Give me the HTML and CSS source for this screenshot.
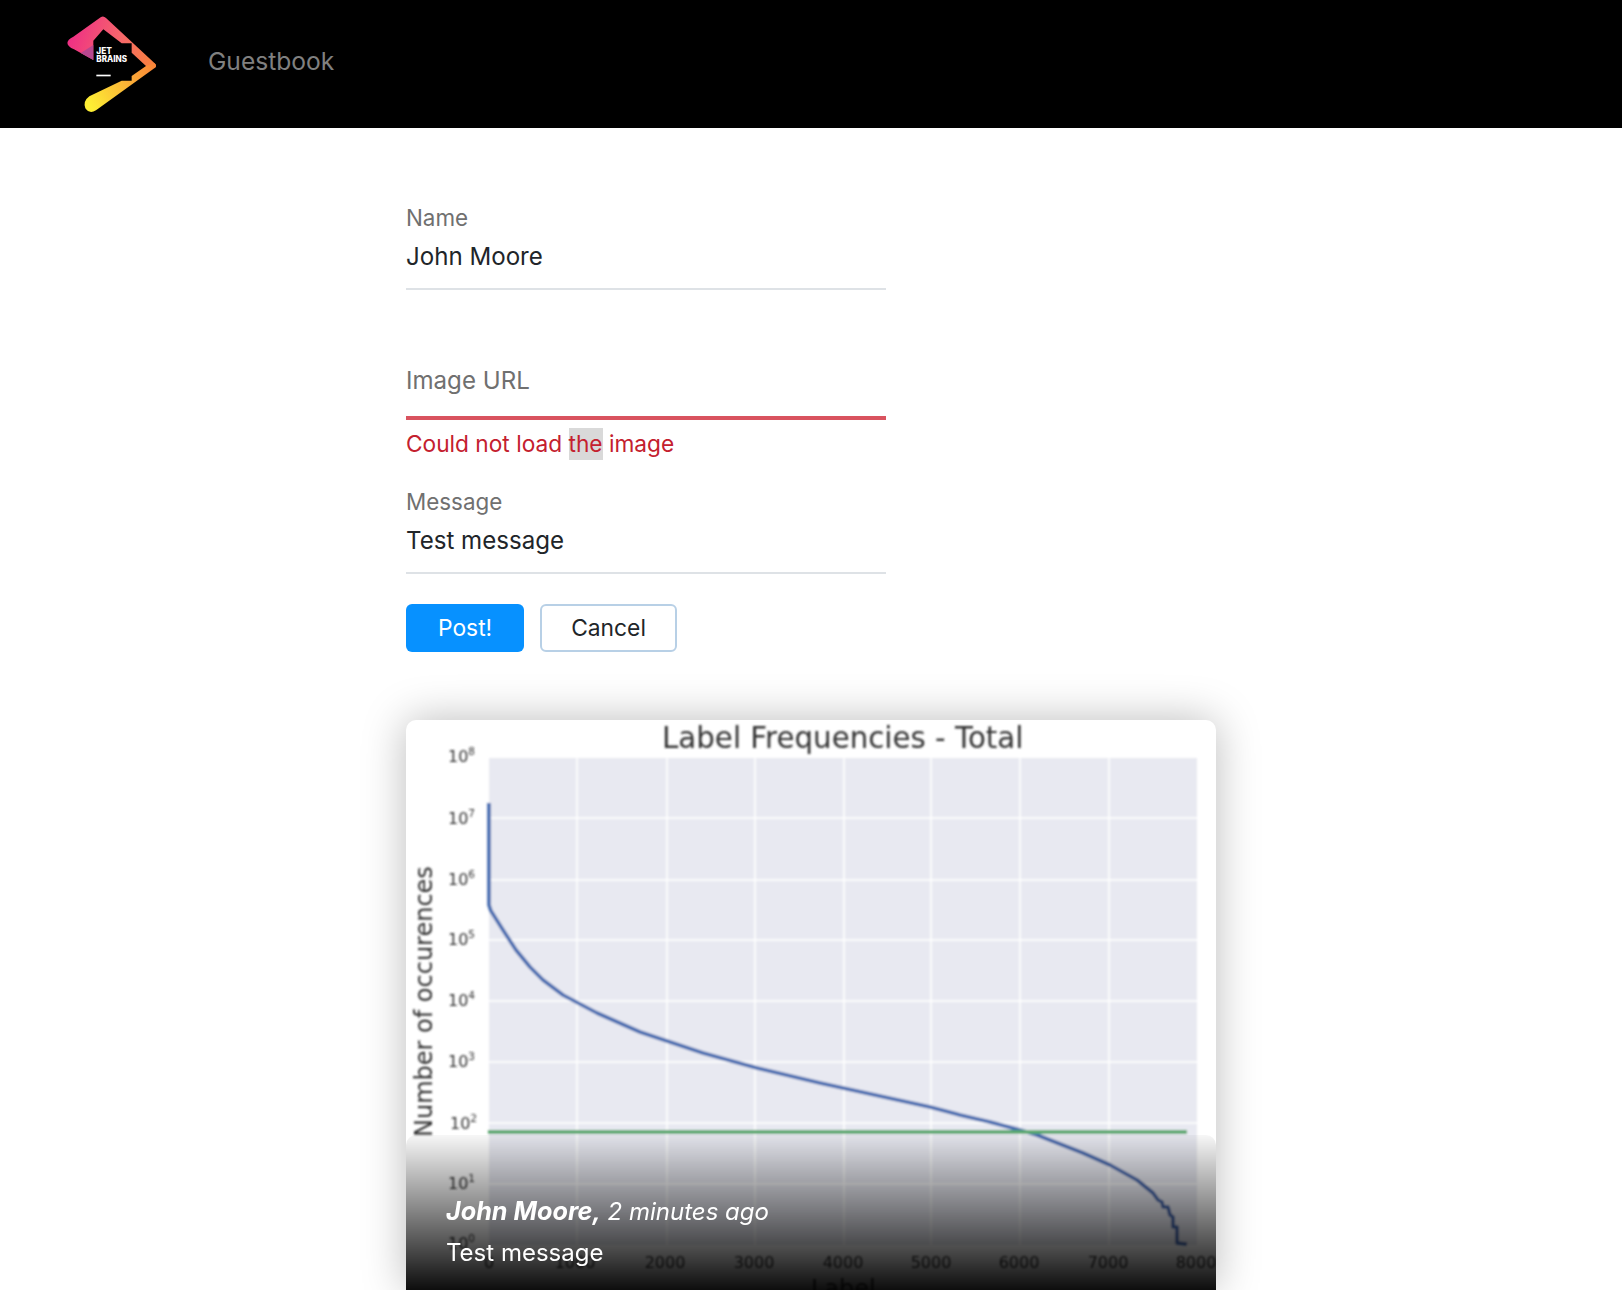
FILE: index.html

```html
<!DOCTYPE html>
<html lang="en">
<head>
  <meta charset="UTF-8" />
  <title>Guestbook</title>
  <link rel="stylesheet" href="styles.css">
</head>
<body>
  <nav class="navbar">
    <svg class="logo" viewBox="0 0 315 315" width="105" height="105">
      <defs>
        <linearGradient id="band-top" x1="25" y1="90" x2="288" y2="170" gradientUnits="userSpaceOnUse">
          <stop offset="0" stop-color="#ee2f85"/>
          <stop offset="0.55" stop-color="#f6686a"/>
          <stop offset="1" stop-color="#f98338"/>
        </linearGradient>
        <linearGradient id="band-bottom" x1="90" y1="285" x2="288" y2="168" gradientUnits="userSpaceOnUse">
          <stop offset="0" stop-color="#fdee34"/>
          <stop offset="1" stop-color="#f98338"/>
        </linearGradient>
      </defs>
      <path fill="url(#band-top)" d="M122 22 Q130 16 138 24 L284 160 Q292 168 284 174 L258 168 L215 128 L215 100 L185 100 L130 58 L100 92 L100 150 L42 118 C16 106 16 92 40 80 Z"/>
      <path fill="#b8468f" d="M100 105 L100 150 L62 129 Z"/>
      <path fill="url(#band-bottom)" d="M284 174 L108 301 Q88 313 76 295 Q68 274 88 259 L185 212 L215 212 L215 198 L258 168 L284 160 Q292 168 284 174 Z"/>
      <text class="logo-text" x="109" y="133">JET</text>
      <text class="logo-text" x="109" y="157" textLength="92" lengthAdjust="spacingAndGlyphs">BRAINS</text>
      <rect x="109" y="194" width="43" height="5" fill="#fff"/>
    </svg>
    <a class="navbar-brand" href="#">Guestbook</a>
  </nav>

  <main class="container">
    <form class="entry-form">
      <div class="field">
        <label for="name">Name</label>
        <input type="text" id="name" value="John Moore" />
      </div>

      <div class="field field-invalid">
        <input type="text" id="image" placeholder="Image URL" />
        <div class="error-text">Could not load <span class="selected">the</span> image</div>
      </div>

      <div class="field field-message">
        <label for="message">Message</label>
        <input type="text" id="message" value="Test message" />
      </div>

      <div class="actions">
        <button type="button" class="btn btn-primary">Post!</button>
        <button type="button" class="btn btn-outline">Cancel</button>
      </div>
    </form>

    <div class="card">
      <svg class="chart" viewBox="406 720 810 570" width="810" height="570">
        <defs>
          <filter id="soft"><feGaussianBlur stdDeviation="0.9"/></filter>
        </defs>
        <g filter="url(#soft)">
          <text class="chart-title" x="662" y="748">Label Frequencies - Total</text>
          <rect x="489" y="758" width="708" height="487" fill="#e8e9f1"/>
          <path class="grid" d="M577 758V1245M667 758V1245M755 758V1245M844 758V1245M931 758V1245M1020 758V1245M1109 758V1245"/>
          <path class="grid" d="M489 818H1197M489 880H1197M489 940H1197M489 1001H1197M489 1062H1197M489 1123H1197M489 1184H1197"/>
          <text class="tick" x="448" y="762">10<tspan class="sup" dy="-7">8</tspan></text>
          <text class="tick" x="448" y="824">10<tspan class="sup" dy="-7">7</tspan></text>
          <text class="tick" x="448" y="885">10<tspan class="sup" dy="-7">6</tspan></text>
          <text class="tick" x="448" y="945">10<tspan class="sup" dy="-7">5</tspan></text>
          <text class="tick" x="448" y="1006">10<tspan class="sup" dy="-7">4</tspan></text>
          <text class="tick" x="448" y="1067">10<tspan class="sup" dy="-7">3</tspan></text>
          <text class="tick" x="450" y="1129">10<tspan class="sup" dy="-7">2</tspan></text>
          <text class="tick" x="448" y="1189">10<tspan class="sup" dy="-7">1</tspan></text>
          <text class="tick" x="448" y="1249">10<tspan class="sup" dy="-7">0</tspan></text>
          <text class="tick tick-x" x="489" y="1268">0</text>
          <text class="tick tick-x" x="575" y="1268">1000</text>
          <text class="tick tick-x" x="665" y="1268">2000</text>
          <text class="tick tick-x" x="754" y="1268">3000</text>
          <text class="tick tick-x" x="843" y="1268">4000</text>
          <text class="tick tick-x" x="931" y="1268">5000</text>
          <text class="tick tick-x" x="1019" y="1268">6000</text>
          <text class="tick tick-x" x="1108" y="1268">7000</text>
          <text class="tick tick-x" x="1196" y="1268">8000</text>
          <text class="axis-label" transform="translate(432 1137) rotate(-90)">Number of occurences</text>
          <text class="axis-label" x="811" y="1297">Label</text>
          <path class="curve" d="M489 803L489 905L491 911L503 930L516 950L530 967L543 980L563 995L597 1013L640 1032L667 1041L703 1053L757 1068L820 1083L843 1088L930 1107L960 1115L990 1122L1020 1130L1037 1135L1083 1153L1110 1165L1137 1180L1153 1193L1158 1200L1162 1202L1163 1207L1168 1207L1170 1215L1173 1217L1173 1227L1177 1227L1177 1243L1187 1244"/>
          <path class="limit" d="M488 1132H1187"/>
        </g>
      </svg>
      <div class="caption">
        <div class="caption-meta"><b>John Moore,</b> 2 minutes ago</div>
        <div class="caption-text">Test message</div>
      </div>
    </div>
  </main>
</body>
</html>
```

FILE: styles.css

```css
* {
  box-sizing: border-box;
}
html, body {
  height: 100%;
}
body {
  margin: 0;
  overflow: hidden;
  font-family: Inter, "Liberation Sans", sans-serif;
  font-size: 24px;
  color: #212529;
  background-color: #fff;
}
.navbar {
  display: flex;
  align-items: center;
  height: 128px;
  padding-left: 60px;
  background-color: #000;
}
.logo {
  flex: none;
  margin-top: -4px;
}
.logo-text {
  font-family: Inter, sans-serif;
  font-size: 25px;
  font-weight: 800;
  fill: #fff;
}
.navbar-brand {
  margin-left: 43px;
  margin-top: -6px;
  color: #808080;
  font-size: 24.6px;
  text-decoration: none;
}
.container {
  width: 810px;
  margin: 0 auto;
  padding-top: 76px;
}
.entry-form {
  width: 480px;
}
.field label {
  display: block;
  height: 28px;
  color: #707070;
  font-size: 22.4px;
  line-height: 27px;
}
.field input {
  display: block;
  width: 100%;
  height: 58px;
  padding: 6px 0 14px;
  border: none;
  border-bottom: 2px solid #dee2e6;
  border-radius: 0;
  outline: none;
  color: #212529;
  background: none;
  font-family: inherit;
  font-size: 24.1px;
  line-height: 36px;
}
.field input::placeholder {
  color: #707070;
  opacity: 1;
}
.field-invalid {
  margin-top: 73px;
}
.field-invalid input {
  height: 57px;
  padding: 0 0 18px;
  border-bottom: 4px solid #d9535f;
}
.error-text {
  margin-top: 8px;
  color: #c4202e;
  font-size: 22.7px;
  line-height: 31px;
}
.selected {
  display: inline-block;
  height: 32px;
  background-color: #d9d9d9;
}
.field-message {
  margin-top: 28px;
}
.actions {
  display: flex;
  gap: 16px;
  margin-top: 30px;
}
.btn {
  height: 48px;
  padding: 0 32px;
  border-radius: 6px;
  font-family: inherit;
  font-size: 22.8px;
  line-height: 1;
}
.btn-primary {
  border: none;
  color: #fff;
  background-color: #0791ff;
}
.btn-outline {
  padding: 0 29px;
  border: 2px solid #b8d0e6;
  color: #212529;
  background-color: #fff;
}
.card {
  position: relative;
  width: 810px;
  height: 570px;
  margin-top: 68px;
  overflow: hidden;
  border-radius: 10px 10px 0 0;
  background-color: #fff;
  box-shadow: 0 0 44px rgba(0, 0, 0, 0.27);
}
.chart {
  display: block;
}
.chart text {
  font-family: "DejaVu Sans", sans-serif;
}
.chart-title {
  font-size: 29.3px;
  fill: #333;
}
.grid {
  fill: none;
  stroke: #fff;
  stroke-width: 2;
  opacity: 0.8;
}
.tick {
  font-size: 16px;
  fill: #333;
}
.tick .sup {
  font-size: 10.5px;
}
.tick-x {
  text-anchor: middle;
}
.axis-label {
  font-size: 24px;
  fill: #333;
}
.curve {
  fill: none;
  stroke: #4068ae;
  stroke-width: 3.6;
  stroke-linejoin: round;
}
.limit {
  fill: none;
  stroke: #5aa86f;
  stroke-width: 3.8;
}
.caption {
  position: absolute;
  left: 0;
  right: 0;
  bottom: 0;
  height: 155px;
  padding: 58px 40px 0;
  border-radius: 10px 10px 0 0;
  color: #fff;
  background: linear-gradient(rgba(0, 0, 0, 0.03), rgba(0, 0, 0, 0.95));
}
.caption-meta {
  font-style: italic;
  line-height: 36px;
}
.caption-meta b {
  font-size: 25.2px;
}
.caption-text {
  margin-top: 5px;
  line-height: 36px;
}
```
